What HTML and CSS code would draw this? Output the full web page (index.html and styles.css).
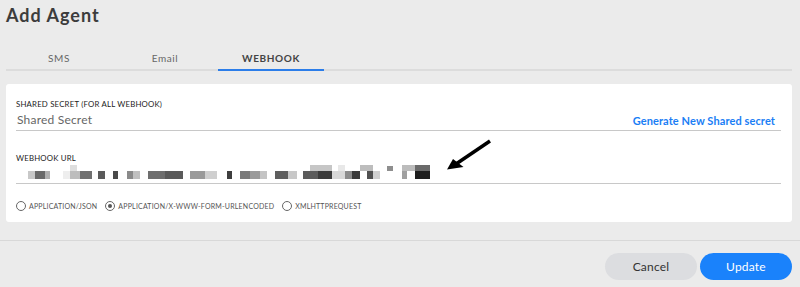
FILE: index.html
```html
<!DOCTYPE html>
<html>
  <head>
    <title>Add Agent</title>
    <meta charset="UTF-8" />
    <link rel="stylesheet" href="styles.css">
  </head>
  <body>
    <div class="modal">
      <h1 class="title">Add Agent</h1>

      <div class="tabs">
        <div class="tab">SMS</div>
        <div class="tab">Email</div>
        <div class="tab active">WEBHOOK</div>
      </div>

      <div class="card">
        <div class="field">
          <div class="label">SHARED SECRET (FOR ALL WEBHOOK)</div>
          <div class="input">
            <span class="placeholder">Shared Secret</span>
            <a class="link" href="#">Generate New Shared secret</a>
          </div>
        </div>

        <div class="field url">
          <div class="label">WEBHOOK URL</div>
          <div class="input blur">
            <svg width="420" height="18" viewBox="0 0 420 18">
              <rect x="54" y="2" width="7" height="6" fill="#dedede"/>
              <rect x="294" y="2" width="22" height="6" fill="#c6c6c6"/>
              <rect x="322" y="2" width="7" height="6" fill="#e8e8e8"/>
              <rect x="344" y="2" width="13" height="6" fill="#bdbdbd"/>
              <rect x="371" y="3" width="6" height="5" fill="#8e8e8e"/>
              <rect x="386" y="2" width="13" height="6" fill="#bcbcbc"/>
              <rect x="399" y="2" width="15" height="6" fill="#6a6a6a"/>

              <rect x="12" y="8" width="7" height="8" fill="#c8c8c8"/>
              <rect x="19" y="8" width="10" height="8" fill="#6a6a6a"/>
              <rect x="29" y="8" width="5" height="8" fill="#b0b0b0"/>
              <rect x="47" y="8" width="7" height="8" fill="#eeeeee"/>
              <rect x="54" y="8" width="10" height="8" fill="#bdbdbd"/>
              <rect x="64" y="8" width="12" height="8" fill="#707070"/>
              <rect x="82" y="8" width="7" height="8" fill="#5a5a5a"/>
              <rect x="97" y="8" width="5" height="8" fill="#4a4a4a"/>
              <rect x="111" y="8" width="6" height="8" fill="#8a8a8a"/>
              <rect x="117" y="8" width="7" height="8" fill="#c0c0c0"/>
              <rect x="132" y="8" width="17" height="8" fill="#6e6e6e"/>
              <rect x="149" y="8" width="18" height="8" fill="#5a5a5a"/>
              <rect x="174" y="8" width="15" height="8" fill="#9a9a9a"/>
              <rect x="189" y="8" width="12" height="8" fill="#cfcfcf"/>
              <rect x="211" y="8" width="5" height="8" fill="#3e3e3e"/>
              <rect x="224" y="8" width="10" height="8" fill="#7a7a7a"/>
              <rect x="234" y="8" width="10" height="8" fill="#9a9a9a"/>
              <rect x="244" y="8" width="7" height="8" fill="#c4c4c4"/>
              <rect x="259" y="8" width="13" height="8" fill="#5e5e5e"/>
              <rect x="272" y="8" width="9" height="8" fill="#c8c8c8"/>
              <rect x="287" y="8" width="15" height="8" fill="#5c5c5c"/>
              <rect x="302" y="8" width="14" height="8" fill="#3c3c3c"/>
              <rect x="316" y="8" width="13" height="8" fill="#d8d8d8"/>
              <rect x="329" y="8" width="7" height="8" fill="#8c8c8c"/>
              <rect x="336" y="8" width="8" height="8" fill="#3a3a3a"/>
              <rect x="351" y="8" width="6" height="8" fill="#505050"/>
              <rect x="357" y="8" width="7" height="8" fill="#d0d0d0"/>
              <rect x="386" y="8" width="5" height="8" fill="#a0a0a0"/>
              <rect x="399" y="8" width="15" height="8" fill="#1e1e1e"/>
            </svg>
          </div>
        </div>

        <div class="radios">
          <label class="radio"><span class="dot"></span>APPLICATION/JSON</label>
          <label class="radio checked"><span class="dot"></span>APPLICATION/X-WWW-FORM-URLENCODED</label>
          <label class="radio"><span class="dot"></span>XMLHTTPREQUEST</label>
        </div>
      </div>
    </div>

    <div class="footer">
      <button type="button" class="btn cancel">Cancel</button>
      <button type="button" class="btn update">Update</button>
    </div>

    <svg class="arrow" width="60" height="45" viewBox="0 0 60 45">
      <line x1="50" y1="5" x2="16" y2="28" stroke="#000" stroke-width="3.5"/>
      <polygon points="7,33.5 13,23 23.5,31" fill="#000"/>
    </svg>
  </body>
</html>
```

FILE: styles.css
```css
body {
  margin: 0;
  background: #ebebeb;
  font-family: Lato, "Liberation Sans", sans-serif;
  position: relative;
  height: 287px;
  overflow: hidden;
}
.modal {
  padding: 0 8px 0 6px;
}
.title {
  margin: 0;
  height: 30px;
  padding-top: 3px;
  font-size: 18px;
  line-height: 24px;
  font-weight: 700;
  letter-spacing: 1px;
  color: #3c3c3c;
  box-sizing: border-box;
}
.tabs {
  display: flex;
  margin-top: 15px;
  border-bottom: 2px solid #dcdcdc;
}
.tab {
  width: 106px;
  height: 24px;
  line-height: 26px;
  text-align: center;
  font-size: 10px;
  letter-spacing: 0.6px;
  color: #666;
}
.tab.active {
  font-weight: 700;
  color: #444;
  border-bottom: 2px solid #2b7de9;
  margin-bottom: -2px;
}
.card {
  margin-top: 13px;
  height: 138px;
  box-sizing: border-box;
  background: #fff;
  border-radius: 3px;
  padding: 15px 11px 0 10px;
}
.label {
  font-size: 7.8px;
  line-height: 10px;
  color: #222;
  letter-spacing: 0.2px;
}
.input {
  display: flex;
  justify-content: space-between;
  align-items: flex-end;
  height: 18px;
  padding-bottom: 3px;
  border-bottom: 1px solid #c8c8c8;
}
.placeholder {
  font-size: 12px;
  color: #666;
  padding-left: 1px;
  letter-spacing: 0.2px;
}
.link {
  font-size: 11px;
  font-weight: 700;
  color: #1a7ef5;
  text-decoration: none;
  padding-right: 6px;
  letter-spacing: 0.1px;
}
.url {
  margin-top: 22px;
}
.input.blur {
  height: 20px;
  padding-bottom: 0;
  align-items: flex-start;
}
.radios {
  display: flex;
  align-items: center;
  margin-top: 17px;
}
.radio {
  display: flex;
  align-items: center;
  font-size: 7px;
  color: #555;
  letter-spacing: 0.2px;
  margin-right: 8px;
}
.dot {
  width: 8px;
  height: 8px;
  border: 1px solid #666;
  border-radius: 50%;
  margin-right: 3px;
  position: relative;
}
.radio.checked .dot::after {
  content: "";
  position: absolute;
  left: 2px;
  top: 2px;
  width: 4px;
  height: 4px;
  border-radius: 50%;
  background: #555;
}
.footer {
  margin-top: 18px;
  border-top: 1px solid #d8d8d8;
  padding: 12px 8px 0 0;
  display: flex;
  justify-content: flex-end;
  gap: 3px;
}
.btn {
  width: 92px;
  height: 27px;
  border: 0;
  border-radius: 14px;
  font-family: inherit;
  font-size: 12px;
  letter-spacing: 0.2px;
}
.cancel {
  background: #dcdde0;
  color: #333;
}
.update {
  background: #1a82fb;
  color: #fff;
}
.arrow {
  position: absolute;
  left: 440px;
  top: 136px;
}
```
